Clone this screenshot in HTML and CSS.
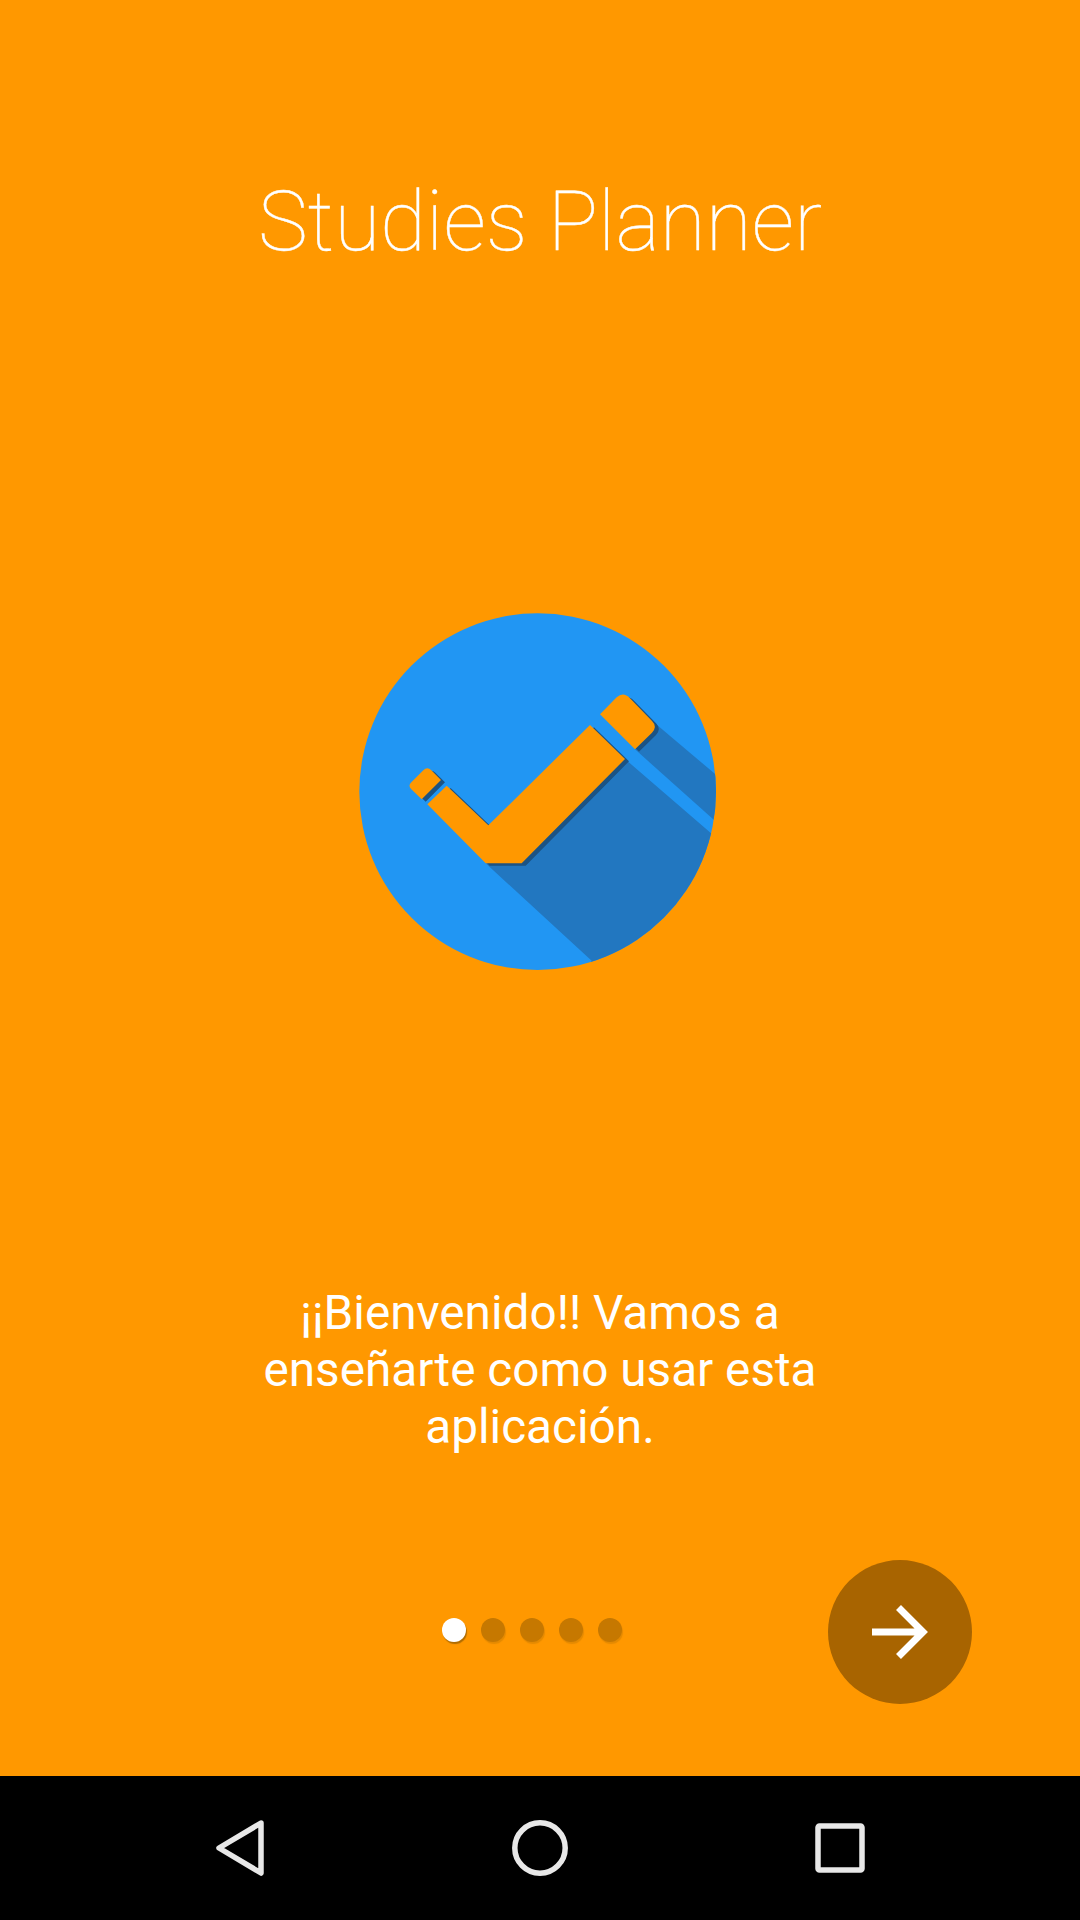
FILE: index.html
```html
<!DOCTYPE html>
<html lang="es">
<head>
  <meta charset="UTF-8">
  <title>Studies Planner</title>
  <link rel="stylesheet" href="styles.css">
</head>
<body>

  <div class="screen">
    <h1 class="title">Studies Planner</h1>

    <svg class="logo" viewBox="0 0 1200 1200" width="400" height="400">
      <defs>
        <clipPath id="circleClip"><circle cx="593" cy="605" r="535"/></clipPath>
        <filter id="soft"><feGaussianBlur stdDeviation="1.5"/></filter>
      </defs>
      <circle cx="593" cy="605" r="535" fill="#2196f3"/>
      <g clip-path="url(#circleClip)" fill="#2277c0">
        <polygon points="437,820 545,820 855,507 1200,805 1200,1300 650,1300 755,1112"/>
        <polygon points="885,478 945,400 1200,615 1200,760"/>
      </g>
      <g fill="#1b5283" filter="url(#soft)" transform="translate(12,7)">
        <path d="M262 643 320 587 445 706 750 405 855 507 545 820 437 820Z"/>
        <path d="M245 628 303 570 274 541Q262 529 250 541L214 577Q203 588 214 598Z"/>
        <path d="M885 478 936 428Q953 410 936 393L870 325Q850 304 830 322L780 373Z"/>
      </g>
      <g fill="#ff9800">
        <path d="M262 643 320 587 445 706 750 405 855 507 545 820 437 820Z"/>
        <path d="M245 628 303 570 274 541Q262 529 250 541L214 577Q203 588 214 598Z"/>
        <path d="M885 478 936 428Q953 410 936 393L870 325Q850 304 830 322L780 373Z"/>
      </g>
    </svg>

    <p class="message">¡¡Bienvenido!! Vamos a enseñarte como usar esta aplicación.</p>

    <div class="pager">
      <div class="dots">
        <span class="dot active"></span>
        <span class="dot"></span>
        <span class="dot"></span>
        <span class="dot"></span>
        <span class="dot"></span>
      </div>
      <div class="next">
        <svg viewBox="0 0 56 56" width="56" height="56">
          <path d="M0 28H50M26.500 3.500 51 28 26.500 52.500" fill="none" stroke="#fff" stroke-width="7"/>
        </svg>
      </div>
    </div>
  </div>

  <div class="navbar">
    <svg viewBox="0 0 48 56" width="48" height="56">
      <path d="M45 3 3 28 45 53Z" fill="none" stroke="#e8e8e8" stroke-width="5.5" stroke-linejoin="round"/>
    </svg>
    <svg viewBox="0 0 56 56" width="56" height="56">
      <circle cx="28" cy="28" r="25.200" fill="none" stroke="#e8e8e8" stroke-width="5.5"/>
    </svg>
    <svg viewBox="0 0 50 50" width="50" height="50">
      <rect x="3" y="3" width="44" height="44" rx="1.5" fill="none" stroke="#e8e8e8" stroke-width="5.5"/>
    </svg>
  </div>

</body>
</html>
```

FILE: styles.css
```css
* {
  box-sizing: border-box;
}

body {
  margin: 0;
  width: 1080px;
  height: 1920px;
  font-family: Roboto, sans-serif;
  color: #fff;
  background-color: #ff9800;
  overflow: hidden;
}

.screen {
  height: 1776px;
  display: flex;
  flex-direction: column;
  align-items: center;
}

.title {
  margin: 172px 0 0;
  font-size: 84px;
  line-height: 100px;
  font-weight: 100;
  text-align: center;
  -webkit-text-stroke: 0.4px #fff;
}

.logo {
  display: block;
  margin-top: 318px;
}

.message {
  width: 620px;
  margin: 295px 0 0;
  font-size: 47.7px;
  line-height: 57px;
  text-align: center;
}

.pager {
  width: 100%;
  margin-top: 104px;
  padding-right: 108px;
  display: flex;
  align-items: center;
}

.dots {
  margin-left: 442px;
  margin-right: auto;
  margin-bottom: 4px;
  display: flex;
  gap: 15px;
}

.dot {
  width: 24px;
  height: 24px;
  border-radius: 50%;
  background-color: #c67800;
  box-shadow: 1px 2px 1px #e58a00;
}

.dot.active {
  background-color: #fff;
  box-shadow: 1px 2px 1px #b06c00;
}

.next {
  width: 144px;
  height: 144px;
  border-radius: 50%;
  background-color: #a86400;
  display: flex;
  align-items: center;
  justify-content: center;
}

.navbar {
  height: 144px;
  padding: 0 215px 0 216px;
  background-color: #000;
  display: flex;
  align-items: center;
  justify-content: space-between;
}
```
